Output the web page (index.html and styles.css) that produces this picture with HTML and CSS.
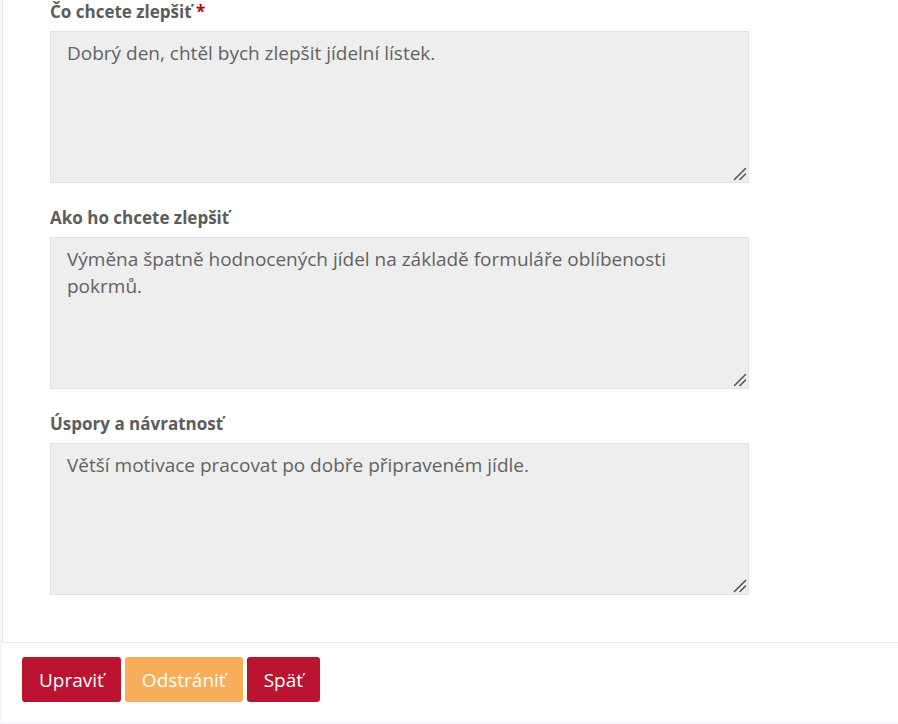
FILE: index.html
```html
<!DOCTYPE html>
<html lang="sk">
<head>
<meta charset="utf-8">
<title>Formulár</title>
<link rel="stylesheet" href="styles.css">
</head>
<body>
<div class="page">
  <div class="card">
    <div class="field">
      <label class="label" for="f1">Čo chcete zlepšiť <span class="req">*</span></label>
      <textarea id="f1" class="area">Dobrý den, chtěl bych zlepšit jídelní lístek.</textarea>
    </div>
    <div class="field">
      <label class="label" for="f2">Ako ho chcete zlepšiť</label>
      <textarea id="f2" class="area">Výměna špatně hodnocených jídel na základě formuláře oblíbenosti pokrmů.</textarea>
    </div>
    <div class="field">
      <label class="label" for="f3">Úspory a návratnosť</label>
      <textarea id="f3" class="area">Větší motivace pracovat po dobře připraveném jídle.</textarea>
    </div>
  </div>
  <div class="footer">
    <button class="btn btn-red">Upraviť</button>
    <button class="btn btn-orange">Odstrániť</button>
    <button class="btn btn-red">Späť</button>
  </div>
</div>
</body>
</html>
```

FILE: styles.css
```css
html, body {
  margin: 0;
  padding: 0;
}
body {
  background: #f5f6fa;
  font-family: "Open Sans", "Noto Sans", sans-serif;
  height: 724px;
  overflow: hidden;
}
.page {
  margin-left: 2px;
  width: 920px;
  background: #ffffff;
}
.card {
  border-left: 1px solid #e8e8ec;
  border-bottom: 1px solid #e8e8ec;
  padding: 0 0 47px 47px;
  display: flex;
  flex-direction: column;
  gap: 23px;
}
.field {
  display: flex;
  flex-direction: column;
  gap: 7px;
}
.label {
  font-size: 17px;
  line-height: 24px;
  font-weight: 700;
  color: #5c5c5c;
}
.req {
  color: #a50d0d;
}
.area {
  box-sizing: border-box;
  width: 699px;
  height: 152px;
  margin: 0;
  padding: 8px 16px;
  border: 1px solid #e3e3e3;
  background: #eeeeee url("data:image/svg+xml,%3Csvg xmlns='http://www.w3.org/2000/svg' width='14' height='14'%3E%3Cpath d='M1.5 12.5 L12.5 1.5 M7 12.5 L12.5 7' stroke='%23555' stroke-width='1.6' stroke-linecap='round' fill='none'/%3E%3C/svg%3E") no-repeat right 1px bottom 1px;
  font-family: "Open Sans", "Noto Sans", sans-serif;
  font-size: 19px;
  line-height: 27px;
  color: #626262;
  resize: none;
  outline: none;
}
.footer {
  display: flex;
  gap: 4px;
  padding: 14px 0 20px 20px;
}
.btn {
  height: 45px;
  padding: 0 17px;
  border: none;
  border-radius: 3px;
  font-family: "Open Sans", "Noto Sans", sans-serif;
  font-size: 19px;
  color: #ffffff;
  cursor: pointer;
}
.btn-red {
  background: #ba1431;
}
.btn-orange {
  background: #f8ad5a;
}
```
